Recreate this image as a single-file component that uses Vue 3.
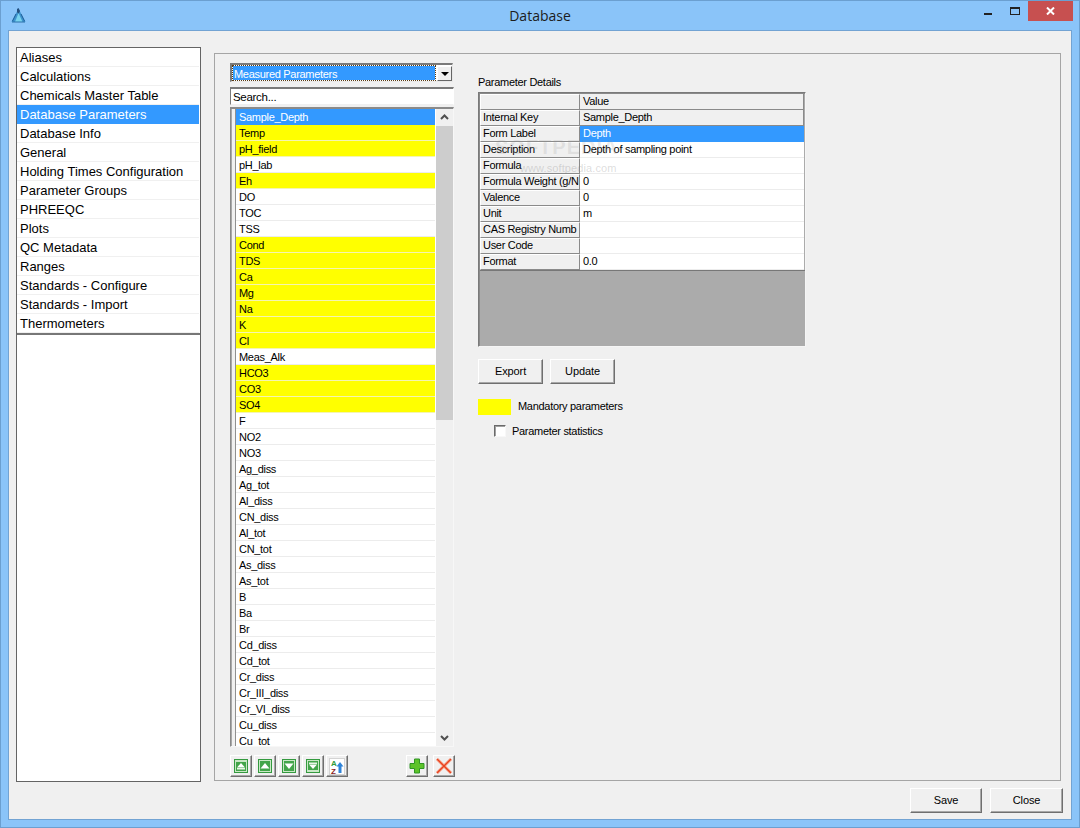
<script setup>
const nav = ['Aliases','Calculations','Chemicals Master Table','Database Parameters','Database Info','General','Holding Times Configuration','Parameter Groups','PHREEQC','Plots','QC Metadata','Ranges','Standards - Configure','Standards - Import','Thermometers']
const mandatory = new Set(['Temp','pH_field','Eh','Cond','TDS','Ca','Mg','Na','K','Cl','HCO3','CO3','SO4'])
const params = ['Sample_Depth','Temp','pH_field','pH_lab','Eh','DO','TOC','TSS','Cond','TDS','Ca','Mg','Na','K','Cl','Meas_Alk','HCO3','CO3','SO4','F','NO2','NO3','Ag_diss','Ag_tot','Al_diss','CN_diss','Al_tot','CN_tot','As_diss','As_tot','B','Ba','Br','Cd_diss','Cd_tot','Cr_diss','Cr_III_diss','Cr_VI_diss','Cu_diss','Cu_tot']
const details = [
  ['Internal Key','Sample_Depth','fixed'],
  ['Form Label','Depth','sel'],
  ['Description','Depth of sampling point',''],
  ['Formula','',''],
  ['Formula Weight (g/N','0',''],
  ['Valence','0',''],
  ['Unit','m',''],
  ['CAS Registry Numb','',''],
  ['User Code','',''],
  ['Format','0.0','']
]
</script>

<template>
  <div class="window">
    <header class="titlebar">
      <svg class="logo" width="15" height="15" viewBox="0 0 15 15">
        <path d="M7.5 0.5 L14.5 14 H0.5 Z" fill="#3f94cf"/>
        <path d="M6 1 L7.5 0 L9 3 L7.5 6 L6 4 Z" fill="#24507f"/>
        <path d="M7.5 5 L11.5 14 H4 Z" fill="#79d3ee"/>
        <path d="M1.5 13 L5 6 M13.5 13 L10 6" stroke="#1f5f99" stroke-width="1" fill="none"/>
        <path d="M1 14 H14" stroke="#2a6fa8" stroke-width="1"/>
      </svg>
      <div class="title">Database</div>
      <div class="controls">
        <span class="min"></span>
        <span class="max"></span>
        <span class="close">
          <svg width="9" height="8" viewBox="0 0 9 8"><path d="M1 0.5 L8 7.5 M8 0.5 L1 7.5" stroke="#fff" stroke-width="2"/></svg>
        </span>
      </div>
    </header>

    <div class="client">
      <div class="main">
        <ul class="nav">
          <li v-for="n in nav" :key="n" :class="{ on: n === 'Database Parameters' }">{{ n }}</li>
          <li class="nav-end"></li>
        </ul>

        <section class="panel">
          <div class="col-list">
            <div class="combo">
              <div class="combo-val"><span>Measured Parameters</span></div>
              <div class="combo-btn"><i></i></div>
            </div>
            <div class="search">Search...</div>
            <div class="listframe">
              <div class="rows">
                <div v-for="(p, i) in params" :key="p" class="row" :class="{ sel: i === 0, mand: mandatory.has(p) }">
                  <b class="stub"></b><span class="cell">{{ p }}</span>
                </div>
              </div>
              <div class="scroll">
                <svg class="arr" width="17" height="16" viewBox="0 0 17 16"><path d="M5 10 L8.5 6.5 L12 10" fill="none" stroke="#505050" stroke-width="2"/></svg>
                <div class="track"><div class="thumb"></div></div>
                <svg class="arr" width="17" height="16" viewBox="0 0 17 16"><path d="M5 6 L8.5 9.5 L12 6" fill="none" stroke="#505050" stroke-width="2"/></svg>
              </div>
            </div>

            <div class="tools">
              <button class="tb"><svg width="14" height="14" viewBox="0 0 14 14"><rect x="0.5" y="0.5" width="13" height="13" fill="#c9e8c6" stroke="#349a3f"/><rect x="2" y="3" width="10" height="9" fill="#43a54a"/><path d="M7 4 L11 8.5 H3 Z" fill="#fff"/><rect x="3" y="9" width="8" height="1.5" fill="#e8f5e6"/></svg></button>
              <button class="tb"><svg width="14" height="14" viewBox="0 0 14 14"><rect x="0.5" y="0.5" width="13" height="13" fill="#c9e8c6" stroke="#349a3f"/><rect x="2" y="2" width="10" height="10" fill="#43a54a"/><path d="M7 4 L11.5 9.5 H2.5 Z" fill="#fff"/></svg></button>
              <button class="tb"><svg width="14" height="14" viewBox="0 0 14 14"><rect x="0.5" y="0.5" width="13" height="13" fill="#c9e8c6" stroke="#349a3f"/><rect x="2" y="2" width="10" height="10" fill="#43a54a"/><path d="M7 10 L11.5 4.5 H2.5 Z" fill="#fff"/></svg></button>
              <button class="tb"><svg width="14" height="14" viewBox="0 0 14 14"><rect x="0.5" y="0.5" width="13" height="13" fill="#c9e8c6" stroke="#349a3f"/><rect x="2" y="2" width="10" height="9" fill="#43a54a"/><rect x="3" y="3.5" width="8" height="1.5" fill="#e8f5e6"/><path d="M7 10 L11 5.5 H3 Z" fill="#fff"/></svg></button>
              <button class="tb"><svg width="16" height="17" viewBox="0 0 16 17"><rect x="0.5" y="0.5" width="15" height="16" fill="#fff" stroke="#d4d4d4"/><text x="2" y="8" class="az a">A</text><text x="2" y="15.5" class="az z">Z</text><path d="M11 15 V7" stroke="#2f83d8" stroke-width="3" fill="none"/><path d="M7.5 8.5 L11 4 L14.5 8.5 Z" fill="#2f83d8"/></svg></button>
              <span class="spacer"></span>
              <button class="tb add"><svg width="16" height="16" viewBox="0 0 16 16"><path d="M5.5 1 H10.5 V5.5 H15 V10.5 H10.5 V15 H5.5 V10.5 H1 V5.5 H5.5 Z" fill="#5dc32a" stroke="#2f9524"/></svg></button>
              <button class="tb del"><svg width="18" height="18" viewBox="0 0 18 18"><path d="M2 2 L16 16 M16 2 L2 16" stroke="#f7a58d" stroke-width="3"/><path d="M2 2 L16 16 M16 2 L2 16" stroke="#e8431f" stroke-width="1.4"/></svg></button>
            </div>
          </div>

          <div class="col-details">
            <div class="caption">Parameter Details</div>
            <div class="grid">
              <div class="gline head"><span class="gl"></span><span class="gv">Value</span></div>
              <div v-for="d in details" :key="d[0]" class="gline" :class="d[2]">
                <span class="gl">{{ d[0] }}</span><span class="gv">{{ d[1] }}</span>
              </div>
              <div class="gempty"></div>
              <div class="wm">SOFTPEDIA<sup>™</sup><small>www.softpedia.com</small></div>
            </div>
            <div class="actions">
              <button class="btn">Export</button>
              <button class="btn">Update</button>
            </div>
            <div class="legend"><i></i><span>Mandatory parameters</span></div>
            <label class="check"><i></i><span>Parameter statistics</span></label>
          </div>
        </section>
      </div>

      <footer class="foot">
        <button class="btn save">Save</button>
        <button class="btn">Close</button>
      </footer>
    </div>
  </div>
</template>

<style>
html, body { margin: 0; padding: 0; background: #8cc5f8; }
</style>

<style scoped>
* { box-sizing: border-box; }
.window {
  width: 1080px; height: 828px; background: #8ac4f9;
  border: 1px solid #6b9fd0; display: flex; flex-direction: column;
  font-family: "Liberation Sans", Arial, sans-serif; font-size: 11px; letter-spacing: -0.3px; color: #000;
}
.titlebar { height: 29px; flex: none; display: flex; align-items: flex-start; position: relative; }
.logo { margin: 7px 0 0 10px; }
.title {
  position: absolute; left: 0; right: 0; top: 5px; text-align: center;
  font: 14px/20px "Open Sans", sans-serif; letter-spacing: 0; color: #1c1c1c;
}
.controls { margin-left: auto; margin-right: 6px; display: flex; align-items: flex-start; }
.min { width: 8px; height: 2px; background: #222; margin-top: 12px; }
.max { width: 10px; height: 8px; border: 1px solid #222; border-top-width: 2px; margin: 6px 8px 0 18px; }
.close { width: 45px; height: 20px; background: #c75050; display: flex; align-items: center; justify-content: center; }

.client {
  flex: 1; margin: 0 7px 7px; background: #f0f0f0; border: 1px solid #72a3d3;
}
.main { display: flex; align-items: flex-start; padding: 16px 0 0 7px; height: 754px; }
.nav {
  list-style: none; margin: 0; padding: 0 1px 0 0; width: 185px; height: 735px; flex: none;
  background: #fff; border: 1px solid #646464;
  display: flex; flex-direction: column;
  font-size: 13px; letter-spacing: 0; color: #000;
}
.nav li { height: 19px; flex: none; padding-left: 3px; line-height: 20px; border-bottom: 1px solid #f0f0f0; white-space: nowrap; }
.nav li.on { background: #3399ff; color: #fff; border-bottom-color: #3399ff; }
.nav li.nav-end { height: 0; border-bottom: 0; margin: 0 -1px 0 0; border-top: 2px solid #777; }

.panel {
  margin: 6px 0 0 13px; width: 847px; height: 728px; border: 1px solid #a5a5a5;
  display: flex; align-items: flex-start; padding: 9px 0 0 15px; flex: none;
}
.col-list { width: 225px; flex: none; display: flex; flex-direction: column; }
.combo {
  width: 223px; height: 19px; display: flex; padding: 1px 0 1px 1px; background: #fff;
  border: 2px solid #7a7a7a; border-right: 1px solid #e8e8e8; border-bottom: 1px solid #e8e8e8;
}
.combo-val { width: 202px; flex: none; background: #3399ff; color: #fff; outline: 1px dotted #5a3a10; outline-offset: 0; line-height: 16px; padding-left: 1px; }
.combo-btn { width: 16px; height: 15px; margin-left: 2px; background: #f0f0f0; border: 1px solid; border-color: #fff #666 #666 #fff; display: flex; align-items: center; justify-content: center; }
.combo-btn i { border: 4px solid transparent; border-top: 4px solid #000; border-bottom: 0; }
.search {
  margin-top: 5px; width: 224px; height: 18px; background: #fff;
  border: 1px solid #7a7a7a; border-top-width: 2px; border-right-color: #fff; border-bottom-color: #f0f0f0; padding-left: 2px; line-height: 17px; font-size: 11.5px;
}
.listframe {
  margin-top: 2px; width: 224px; height: 640px; display: flex; overflow: hidden;
  background: #fff; border: 1px solid #8a8a8a; border-top-width: 2px; border-right-color: #f7f7f7; border-bottom-color: #f7f7f7;
}
.rows { flex: none; width: 204px; height: 100%; overflow: hidden; }
.row { height: 16px; display: flex; }
.stub { width: 5px; flex: none; background: #f0f0f0; border-left: 1px solid #a8a8a8; border-right: 1px solid #8f8f8f; }
.cell { flex: 1; padding-left: 3px; line-height: 16px; border-bottom: 1px solid #ececec; white-space: nowrap; }
.row.mand .cell { background: #ffff00; border-bottom-color: #f5f5b0; }
.row.sel .cell { background: #3399ff; color: #fff; border-bottom-color: #3399ff; }
.scroll { width: 17px; flex: none; background: #f0f0f0; display: flex; flex-direction: column; margin-left: 1px; }
.arr { flex: none; display: block; }
.track { flex: 1; }
.thumb { height: 294px; margin-top: 1px; background: #cdcdcd; }

.tools { display: flex; align-items: flex-start; margin-top: 8px; }
.tb {
  width: 22px; height: 22px; padding: 0; margin: 0 2px 0 0; background: #f0f0f0; display: flex; align-items: center; justify-content: center;
  border: 1px solid; border-color: #fff #6f6f6f #6f6f6f #fff; box-shadow: inset -1px -1px 0 #a8a8a8; flex: none;
}
.spacer { width: 56px; flex: none; }
.tb.add { margin-right: 5px; }
.tb.del { margin-right: 0; }
.az { font: bold 8px "Liberation Sans", sans-serif; letter-spacing: 0; }
.az.a { fill: #2f9a3a; } .az.z { fill: #8a1c1c; }

.col-details { margin-left: 23px; width: 330px; flex: none; display: flex; flex-direction: column; align-items: flex-start; }
.caption { margin-top: 13px; line-height: 13px; }
.grid {
  position: relative; margin-top: 3px; width: 328px; height: 255px; background: #ababab;
  border: 1px solid #7a7a7a; border-right-color: #f5f5f5; border-bottom-color: #f5f5f5; box-shadow: inset 1px 1px 0 #8a8a8a;
  padding: 1px 0 0 1px; overflow: hidden;
}
.gline { display: flex; height: 16px; }
.gl {
  width: 100px; flex: none; background: #f0f0f0; border: 1px solid; border-color: #fff #8a8a8a #8a8a8a #fff;
  padding-left: 2px; line-height: 12px; overflow: hidden; white-space: nowrap;
}
.gv { width: 224px; flex: none; background: #fff; padding-left: 3px; line-height: 15px; border-bottom: 1px solid #ececec; white-space: nowrap; }
.gline.head .gv, .gline.fixed .gv { background: #f0f0f0; border-bottom-color: #8a8a8a; border-right: 1px solid #8a8a8a; }
.gline.sel .gv { background: #3399ff; color: #fff; border-bottom-color: #3399ff; }
.gempty { border-top: 1px solid #777; }
.wm { position: absolute; left: 16px; top: 44px; font: bold 20px/20px "Liberation Sans", sans-serif; letter-spacing: 1px; color: rgba(150,150,150,.2); pointer-events: none; white-space: nowrap; }
.wm sup { font-size: 7px; font-weight: normal; vertical-align: 2px; line-height: 0; }
.wm small { display: block; font: 11px/12px "Liberation Sans", sans-serif; margin: 5px 0 0 25px; letter-spacing: .1px; color: rgba(130,130,130,.28); }

.actions { display: flex; gap: 7px; margin-top: 12px; }
.btn {
  height: 25px; padding: 0 0 2px; background: #f0f0f0; color: #000; font: inherit; letter-spacing: -0.1px;
  border: 1px solid; border-color: #fff #6f6f6f #6f6f6f #fff; box-shadow: inset -1px -1px 0 #a8a8a8;
}
.actions .btn { width: 65px; }
.legend { display: flex; align-items: flex-start; margin-top: 15px; }
.legend i { width: 33px; height: 16px; background: #ffff00; }
.legend span { margin-left: 7px; line-height: 14px; }
.check { display: flex; align-items: center; margin: 10px 0 0 16px; }
.check i { width: 12px; height: 12px; background: #fff; border: 1px solid; border-color: #6a6a6a #f8f8f8 #f8f8f8 #6a6a6a; box-shadow: inset 1px 1px 0 #a0a0a0; }
.check span { margin-left: 6px; }

.foot { display: flex; justify-content: flex-end; gap: 8px; padding: 3px 8px 0 0; }
.foot .btn { width: 73px; }
.foot .save { width: 72px; }
</style>
